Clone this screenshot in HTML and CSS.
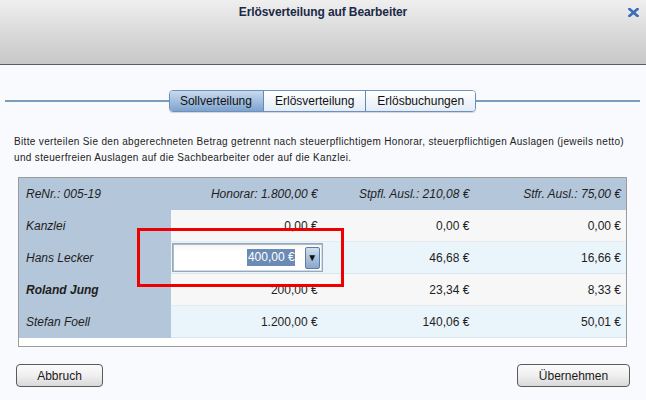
FILE: index.html
```html
<!DOCTYPE html>
<html lang="de">
<head>
<meta charset="utf-8">
<title>Erlösverteilung auf Bearbeiter</title>
<link rel="stylesheet" href="styles.css">
</head>
<body>
<div class="dialog">
  <header class="titlebar">
    <span class="spacer"></span>
    <h1 class="title">Erlösverteilung auf Bearbeiter</h1>
    <span class="close" aria-label="Schließen">
      <svg width="11" height="9" viewBox="0 0 11 9"><path d="M1.5 1 L9.5 8 M9.5 1 L1.5 8" stroke="#3c6cb4" stroke-width="2.6" stroke-linecap="square" fill="none"/></svg>
    </span>
  </header>

  <div class="tabbar">
    <span class="rule"></span>
    <nav class="tabs">
      <span class="tab active">Sollverteilung</span>
      <span class="tab">Erlösverteilung</span>
      <span class="tab">Erlösbuchungen</span>
    </nav>
    <span class="rule"></span>
  </div>

  <p class="intro">Bitte verteilen Sie den abgerechneten Betrag getrennt nach steuerpflichtigem Honorar, steuerpflichtigen Auslagen (jeweils netto)<br>und steuerfreien Auslagen auf die Sachbearbeiter oder auf die Kanzlei.</p>

  <div class="table-wrap">
    <div class="table">
      <div class="row head">
        <div class="cell name">ReNr.: 005-19</div>
        <div class="cell num">Honorar: 1.800,00 €</div>
        <div class="cell num">Stpfl. Ausl.: 210,08 €</div>
        <div class="cell num">Stfr. Ausl.: 75,00 €</div>
      </div>
      <div class="row odd">
        <div class="cell name">Kanzlei</div>
        <div class="cell num">0,00 €</div>
        <div class="cell num">0,00 €</div>
        <div class="cell num">0,00 €</div>
      </div>
      <div class="row even">
        <div class="cell name">Hans Lecker</div>
        <div class="cell edit">
          <div class="combo">
            <span class="value"><span class="sel">400,00 €</span></span>
            <span class="drop">▼</span>
          </div>
        </div>
        <div class="cell num">46,68 €</div>
        <div class="cell num">16,66 €</div>
      </div>
      <div class="row odd">
        <div class="cell name strong">Roland Jung</div>
        <div class="cell num">200,00 €</div>
        <div class="cell num">23,34 €</div>
        <div class="cell num">8,33 €</div>
      </div>
      <div class="row even">
        <div class="cell name">Stefan Foell</div>
        <div class="cell num">1.200,00 €</div>
        <div class="cell num">140,06 €</div>
        <div class="cell num">50,01 €</div>
      </div>
    </div>
  </div>

  <div class="actions">
    <button class="btn cancel">Abbruch</button>
    <button class="btn ok">Übernehmen</button>
  </div>

  <div class="mark"></div>
</div>
</body>
</html>
```

FILE: styles.css
```css
* { box-sizing: border-box; }

html, body {
  margin: 0;
  padding: 0;
}

body {
  background: #f9fafd;
  font-family: "Liberation Sans", Arial, sans-serif;
  font-size: 12px;
  color: #1e1e1e;
  width: 646px;
  height: 400px;
  overflow: hidden;
}

.dialog {
  position: relative;
  width: 646px;
  height: 400px;
}

/* title bar */
.titlebar {
  height: 65px;
  background: linear-gradient(to bottom, #efefef 0%, #dcdcdc 45%, #c8c8c8 100%);
  border-bottom: 1px solid #5c5c5c;
  display: grid;
  grid-template-columns: 1fr auto 1fr;
  align-items: start;
  padding-top: 4px;
}

.title {
  margin: 0;
  font-size: 12px;
  line-height: 16px;
  font-weight: bold;
  color: #1b2946;
  letter-spacing: -0.1px;
}

.close {
  justify-self: end;
  margin-right: 7px;
  margin-top: 4px;
  display: flex;
}

/* tabs */
.tabbar {
  display: flex;
  align-items: center;
  padding: 0 6px 0 5px;
  margin-top: 25px;
}

.rule {
  flex: 1;
  height: 2px;
  background: #7b9bbf;
}

.tabs {
  display: flex;
  height: 22px;
  border: 1px solid #6d91be;
  border-radius: 4px;
  overflow: hidden;
  box-shadow: 0 1px 1px rgba(0,0,0,0.15);
}

.tab {
  display: flex;
  align-items: center;
  padding: 0 11px;
  font-size: 12px;
  color: #111;
  background: linear-gradient(to bottom, #ffffff 0%, #f1f6fb 50%, #e3ecf6 100%);
  border-left: 1px solid #6489b8;
}

.tab:first-child { border-left: none; padding: 0 11px 0 10px; }

.tab.active {
  background: linear-gradient(to bottom, #c9daed 0%, #a3bfdf 50%, #7fa3cc 100%);
}

/* intro text */
.intro {
  margin: 22px 0 0 14px;
  font-size: 10px;
  line-height: 15.6px;
  letter-spacing: 0.34px;
  color: #222;
}

/* table */
.table-wrap {
  margin: 12px 19px 0 18px;
  border: 1px solid #9c9c9c;
  background: #ffffff;
  padding-bottom: 8px;
}

.table {
  display: grid;
  grid-template-columns: 152px repeat(3, 1fr);
}

.row { display: contents; }

.cell {
  height: 32px;
  display: flex;
  align-items: center;
  font-size: 12px;
  color: #1e1e1e;
}

.cell.name {
  background: #b4c6d9;
  padding-left: 7px;
  font-style: italic;
}

.cell.name.strong { font-weight: bold; }

.cell.num {
  justify-content: flex-end;
  padding-right: 5px;
}

.head .cell {
  background: #b4c6d9;
  font-style: italic;
}

.odd .cell.num, .odd .cell.edit { background: #f7f7f7; border-bottom: 1px solid #e4ebf0; }
.even .cell.num, .even .cell.edit { background: #eaf4fb; border-bottom: 1px solid #dbe7f0; }

.cell.edit {
  padding: 1px 0 1px 1px;
  align-items: stretch;
}

.combo {
  flex: 1;
  display: flex;
  align-items: center;
  border: 1px solid #8eaaca;
  box-shadow: inset 1px 1px 0 #b9b9b9, inset -1px -1px 0 #d9d9d9;
  background: linear-gradient(to bottom, #f4f4f4 0%, #ffffff 25%, #ffffff 100%);
  padding-right: 2px;
}

.value {
  flex: 1;
  display: flex;
  justify-content: flex-end;
  padding-right: 10px;
}

.sel {
  background: #6b8bb4;
  color: #ffffff;
  line-height: 17px;
  padding-left: 1px;
}

.drop {
  width: 15px;
  height: 22px;
  display: flex;
  align-items: center;
  justify-content: center;
  font-size: 10px;
  color: #111;
  border: 1px solid #5b7ca5;
  border-radius: 2px;
  background: linear-gradient(to bottom, #d3e0ee 0%, #a9c1dc 50%, #8aa8ca 100%);
}

/* buttons */
.actions {
  display: flex;
  justify-content: space-between;
  padding: 0 16px;
  margin-top: 17px;
}

.btn {
  height: 23px;
  font-family: "Liberation Sans", Arial, sans-serif;
  font-size: 12px;
  color: #1a1a1a;
  border: 1px solid #5a5a5a;
  border-radius: 4px;
  background: linear-gradient(to bottom, #fbfbfb 0%, #efefef 50%, #d9d9d9 100%);
  padding: 0;
}

.btn.cancel { width: 87px; }
.btn.ok { width: 113px; }

/* red annotation frame */
.mark {
  position: absolute;
  left: 137px;
  top: 228px;
  width: 207px;
  height: 59px;
  border: 3px solid #ee0000;
  pointer-events: none;
}
```
